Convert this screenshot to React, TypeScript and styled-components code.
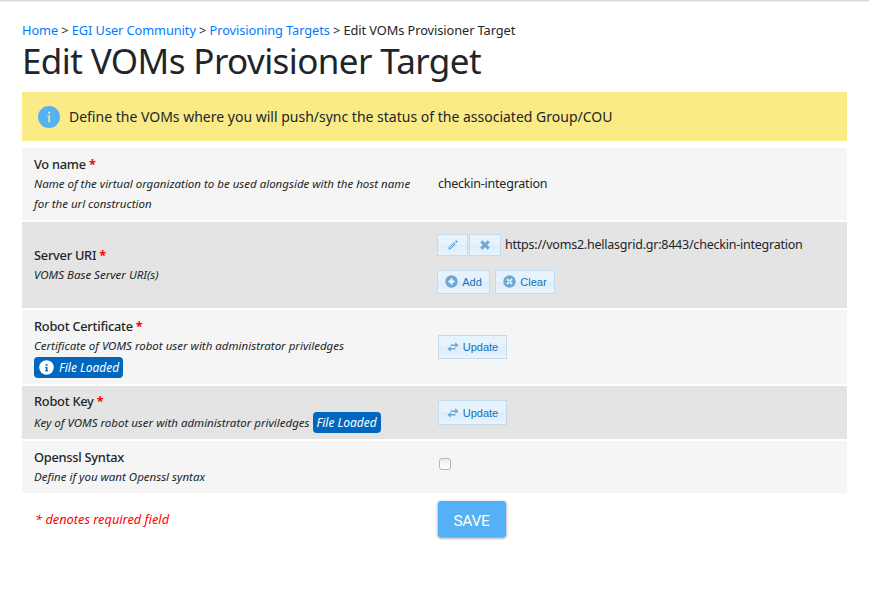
import React from "react";
import styled, { createGlobalStyle, css } from "styled-components";

const GlobalStyle = createGlobalStyle`
  *, *::before, *::after { box-sizing: border-box; }
  html, body { margin: 0; background: #fff; }
  body { font-family: "Noto Sans", sans-serif; font-size: 12.5px; line-height: 20px; color: #212529; overflow: hidden; }
`;

const Page = styled.main`
  height: 602px;
  padding: 19px 25px 0 22px;
`;

const TopEdge = styled.div`
  height: 1px;
  width: 869px;
  background: #d8d8d8;
  box-shadow: 0 1px 0 #f0f0f0;
`;

const Breadcrumb = styled.nav`
  font-size: 12.8px;
  line-height: 20px;
  letter-spacing: -0.08px;
  white-space: nowrap;
`;

const Crumb = styled.a`
  color: #007bff;
  text-decoration: none;
`;

const Title = styled.h1`
  margin: 0;
  height: 52px;
  font-size: 35px;
  line-height: 41px;
  font-weight: 400;
  letter-spacing: -0.6px;
  white-space: nowrap;
`;

const Notice = styled.section`
  display: flex;
  align-items: center;
  gap: 9px;
  height: 49px;
  padding-left: 16px;
  margin-bottom: 7px;
  background: #faeb87;
  font-size: 14px;
  white-space: nowrap;
`;

const Fields = styled.div`
  display: grid;
  row-gap: 2px;
`;

const Row = styled.div<{ $height: number; $shaded?: boolean }>`
  display: grid;
  grid-template-columns: 404px 1fr;
  align-items: center;
  height: ${(p) => p.$height}px;
  padding-left: 12px;
  background: ${(p) => (p.$shaded ? "#e4e4e4" : "#f5f5f5")};
`;

const Label = styled.div<{ $tight?: boolean }>`
  font-size: 12.8px;
  font-weight: 500;
  letter-spacing: -0.25px;
  ${(p) => p.$tight && css`
    margin-top: -1px;
    padding-bottom: 1px;
  `}
`;

const Required = styled.span`
  color: #f00;
  font-weight: 700;
`;

const Description = styled.div`
  display: flex;
  align-items: center;
  font-size: 11.5px;
  font-style: italic;
  white-space: pre-line;
  gap: 3px;
`;

const Badge = styled.span<{ $block?: boolean }>`
  display: flex;
  align-items: center;
  width: fit-content;
  height: 21px;
  padding: 1px 4px 0;
  gap: 4px;
  border-radius: 4px;
  background: #0067be;
  color: #fff;
  font-size: 12px;
  font-style: italic;
  line-height: 20px;
  white-space: nowrap;
  ${(p) => p.$block && css`
    margin-top: 1px;
    padding-left: 5px;
    gap: 5px;
    svg { margin-top: -1px; }
  `}
`;

const Value = styled.div`
  font-size: 12.5px;
  letter-spacing: -0.23px;
  white-space: nowrap;
`;

const UriLine = styled.div`
  display: flex;
  align-items: center;
  gap: 1px;
  margin: -3px 0 0 -1px;
`;

const UriText = styled.span`
  margin-left: 3px;
`;

const ButtonLine = styled.div`
  display: flex;
  gap: 5px;
  margin: 14px 0 0 -1px;
`;

const ActionButton = styled.button<{ $width: number; $height?: number }>`
  display: flex;
  align-items: center;
  justify-content: center;
  gap: 4px;
  width: ${(p) => p.$width}px;
  height: ${(p) => p.$height ?? 24}px;
  padding: 0;
  border: 1px solid #c5dbec;
  border-radius: 0;
  background: linear-gradient(#e7f3fc 0 48%, #dcedfa 52%, #e8f4fd 100%);
  color: #1270bd;
  font: 11px "Liberation Sans", Arial, sans-serif;
`;

const CheckControl = styled.input`
  appearance: none;
  display: block;
  width: 12px;
  height: 12px;
  margin: -6px 0 0 1px;
  border: 1px solid #b4b4b4;
  border-radius: 3px;
  background: linear-gradient(#eee, #fff);
`;

const Footer = styled.footer`
  display: grid;
  grid-template-columns: 403px 1fr;
  padding: 8px 0 0 13px;
`;

const RequiredNote = styled.div`
  padding-top: 8px;
  color: #f00;
  font-size: 12.8px;
  font-style: italic;
`;

const SaveButton = styled.button`
  width: 68px;
  height: 36px;
  padding: 3px 1px 0 0;
  border: 0;
  border-radius: 3px;
  background: #55b0f5;
  color: #fff;
  font: 15.5px Roboto, sans-serif;
  letter-spacing: -0.3px;
  box-shadow: 0 1px 3px rgba(0, 0, 0, 0.5);
`;

const NoticeIcon = () => (
  <svg width="22" height="22" viewBox="0 0 22 22">
    <circle cx="11" cy="11" r="11" fill="#55b0f5" />
    <path d="M10.1 5.8h2v2h-2zM9.4 9.5h2.7v6.8h-1.8v-5.6h-.9z" fill="#e9e99a" />
  </svg>
);

const BadgeIcon = () => (
  <svg width="15" height="15" viewBox="0 0 15 15">
    <circle cx="7.5" cy="7.5" r="7.3" fill="#fff" />
    <path d="M6.7 4h1.8v1.7H6.7zM6.2 6.8h2.3v3.5h.6v1H6v-1h.8V7.8h-.6z" fill="#0067be" />
  </svg>
);

const PencilIcon = () => (
  <svg width="12" height="12" viewBox="0 0 12 12">
    <path d="M1.3 10.7l.6-2.5 5.1-5.1 1.9 1.9-5.1 5.1z" fill="#6da8d5" />
    <path d="M3.1 8.9l4.2-4.2" stroke="#e7f3fc" strokeWidth=".8" />
    <path d="M8 2.2l1.2-1.2 1.8 1.8L9.8 4z" fill="#6da8d5" />
  </svg>
);

const CrossIcon = () => (
  <svg width="10" height="10" viewBox="0 0 10 10">
    <path d="M1.3 1.4l7.4 7.2M8.7 1.4L1.3 8.6" stroke="#6da8d5" strokeWidth="3" />
  </svg>
);

const PlusCircleIcon = () => (
  <svg width="13" height="13" viewBox="0 0 13 13">
    <circle cx="6.5" cy="6.5" r="6.2" fill="#6da8d5" />
    <path d="M6.5 3.5v6M3.5 6.5h6" stroke="#fff" strokeWidth="2" />
  </svg>
);

const CrossCircleIcon = () => (
  <svg width="13" height="13" viewBox="0 0 13 13">
    <circle cx="6.5" cy="6.5" r="6.2" fill="#6da8d5" />
    <path d="M4 4l5 5M9 4L4 9" stroke="#e7f3fc" strokeWidth="1.9" />
    <rect x="5.8" y="5.8" width="1.4" height="1.4" fill="#6da8d5" />
  </svg>
);

const TransferIcon = () => (
  <svg width="12" height="10" viewBox="0 0 12 10">
    <path d="M3.6 2.4h4.6V.3l3.5 2.9-3.5 2.6V4.1H3.6zM8.4 5.9v1.7H3.8v2.1L.3 6.8l3.5-2.6v1.7z" fill="#6da8d5" />
  </svg>
);

const UpdateButton = ({ height }: { height?: number }) => (
  <ActionButton $width={69} $height={height}>
    <TransferIcon />
    Update
  </ActionButton>
);

export default function App() {
  return (
    <>
      <GlobalStyle />
      <TopEdge />
      <Page>
        <Breadcrumb>
          <Crumb>Home</Crumb> &gt; <Crumb>EGI User Community</Crumb> &gt;{" "}
          <Crumb>Provisioning Targets</Crumb> &gt; Edit VOMs Provisioner Target
        </Breadcrumb>
        <Title>Edit VOMs Provisioner Target</Title>
        <Notice>
          <NoticeIcon />
          Define the VOMs where you will push/sync the status of the associated Group/COU
        </Notice>
        <Fields>
          <Row $height={72}>
            <div>
              <Label>Vo name <Required>*</Required></Label>
              <Description>
                {"Name of the virtual organization to be used alongside with the host name\nfor the url construction"}
              </Description>
            </div>
            <Value>checkin-integration</Value>
          </Row>
          <Row $height={86} $shaded>
            <div>
              <Label>Server URI <Required>*</Required></Label>
              <Description>VOMS Base Server URI(s)</Description>
            </div>
            <Value>
              <UriLine>
                <ActionButton $width={31} $height={22}><PencilIcon /></ActionButton>
                <ActionButton $width={32} $height={22}><CrossIcon /></ActionButton>
                <UriText>https://voms2.hellasgrid.gr:8443/checkin-integration</UriText>
              </UriLine>
              <ButtonLine>
                <ActionButton $width={53}><PlusCircleIcon />Add</ActionButton>
                <ActionButton $width={60}><CrossCircleIcon />Clear</ActionButton>
              </ButtonLine>
            </Value>
          </Row>
          <Row $height={74}>
            <div>
              <Label>Robot Certificate <Required>*</Required></Label>
              <Description>Certificate of VOMS robot user with administrator priviledges</Description>
              <Badge $block><BadgeIcon />File Loaded</Badge>
            </div>
            <UpdateButton />
          </Row>
          <Row $height={53} $shaded>
            <div>
              <Label $tight>Robot Key <Required>*</Required></Label>
              <Description>
                Key of VOMS robot user with administrator priviledges
                <Badge>File Loaded</Badge>
              </Description>
            </div>
            <UpdateButton height={25} />
          </Row>
          <Row $height={52}>
            <div>
              <Label>Openssl Syntax</Label>
              <Description>Define if you want Openssl syntax</Description>
            </div>
            <CheckControl type="checkbox" aria-label="Openssl Syntax" />
          </Row>
        </Fields>
        <Footer>
          <RequiredNote>* denotes required field</RequiredNote>
          <SaveButton>SAVE</SaveButton>
        </Footer>
      </Page>
    </>
  );
}
